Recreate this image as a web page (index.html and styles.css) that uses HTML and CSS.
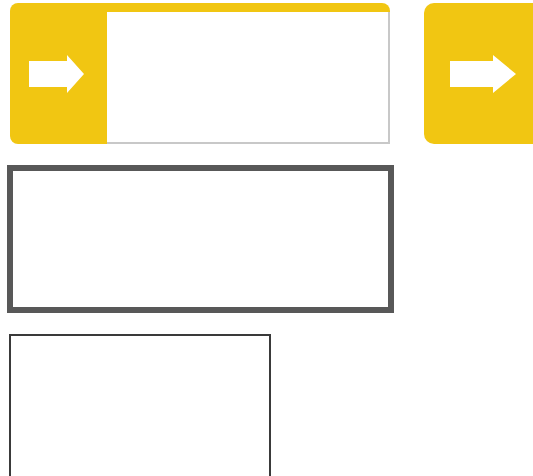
FILE: index.html
```html
<!DOCTYPE html>
<html lang="en">
<head>
    <meta charset="UTF-8">
    <meta name="viewport" content="width=device-width, initial-scale=1.0">
    <title>Input Styles</title>
    <link rel="stylesheet" href="styles.css">
</head>
<body>
    <div class="row">
        <div class="field">
            <div class="field-icon">
                <svg width="56" height="38" viewBox="0 0 56 38">
                    <path d="M0 6 H38 V0 L55 19 L38 38 V32 H0 Z" fill="#fff"/>
                </svg>
            </div>
            <div class="field-input"></div>
        </div>

        <button class="go-btn">
            <svg width="66" height="38" viewBox="0 0 66 38">
                <path d="M0 6 H43 V0 L66 19 L43 38 V32 H0 Z" fill="#fff"/>
            </svg>
        </button>
    </div>

    <div class="box-thick"></div>

    <div class="box-thin"></div>
</body>
</html>
```

FILE: styles.css
```css
body {
    margin: 0;
    padding-top: 3px;
    background-color: #fff;
    overflow: hidden;
    font-family: "Liberation Sans", Arial, sans-serif;
}

.row {
    display: flex;
    gap: 34px;
    margin-left: 10px;
    width: 600px;
}

.field {
    display: flex;
    width: 380px;
    height: 141px;
    background-color: #f1c612;
    border-radius: 8px 8px 0 8px;
}

.field-icon {
    width: 97px;
    display: flex;
    align-items: center;
    padding-left: 19px;
    box-sizing: border-box;
}

.field-icon svg {
    display: block;
}

.field-input {
    flex: 1;
    margin-top: 9px;
    background-color: #fff;
    border-right: 2px solid #c8c8c8;
    border-bottom: 2px solid #c8c8c8;
}

.go-btn {
    width: 130px;
    height: 141px;
    border: none;
    border-radius: 10px;
    background-color: #f1c612;
    padding: 0 0 0 26px;
    display: flex;
    align-items: center;
    cursor: pointer;
}

.box-thick {
    margin: 21px 0 0 7px;
    width: 387px;
    height: 148px;
    box-sizing: border-box;
    border: 6px solid #585858;
}

.box-thin {
    margin: 21px 0 0 9px;
    width: 262px;
    height: 160px;
    box-sizing: border-box;
    border: 2px solid #3a3a3a;
}
```
